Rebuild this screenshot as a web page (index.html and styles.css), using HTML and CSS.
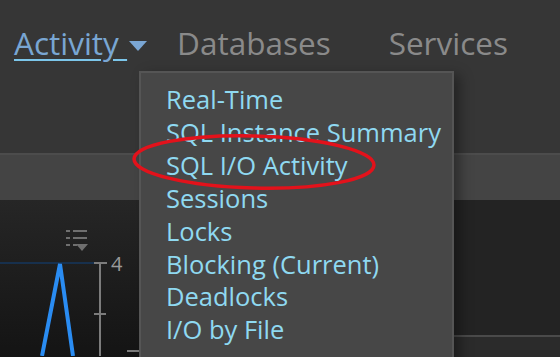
FILE: index.html
```html
<!DOCTYPE html>
<html lang="en">
<head>
    <meta charset="UTF-8">
    <meta name="viewport" content="width=device-width, initial-scale=1.0">
    <title>Activity</title>
    <link rel="stylesheet" href="styles.css">
</head>
<body>
    <div class="page">
        <div class="topbar">
            <nav class="nav">
                <a class="nav-item active" href="#">Activity&nbsp;</a>
                <svg class="caret" width="18" height="10" viewBox="0 0 18 10"><polygon points="0,0 18,0 9,10" fill="#7aa6d4"/></svg>
                <a class="nav-item databases" href="#">Databases</a>
                <a class="nav-item" href="#">Services</a>
            </nav>
        </div>
        <div class="band"></div>
        <div class="panels">
            <div class="chart">
                <svg width="452" height="156" viewBox="0 0 452 156">
                    <!-- filter icon -->
                    <g fill="#6f6f6f">
                        <rect x="66" y="30" width="4" height="2"/>
                        <rect x="73" y="30" width="14" height="2"/>
                        <rect x="66" y="37" width="4" height="2"/>
                        <rect x="73" y="37" width="14" height="2"/>
                        <rect x="66" y="44" width="4" height="2"/>
                        <rect x="73" y="44" width="4" height="2"/>
                        <polygon points="76,44 88,44 82,51"/>
                    </g>
                    <line x1="0" y1="63" x2="96" y2="63" stroke="#17304d" stroke-width="2"/>
                    <polyline points="42,156 60,64 73,156" fill="none" stroke="#2a8cf2" stroke-width="4" stroke-linejoin="miter"/>
                    <!-- axis -->
                    <line x1="100" y1="63" x2="100" y2="156" stroke="#7c7c7c" stroke-width="2"/>
                    <line x1="94" y1="63" x2="107" y2="63" stroke="#7c7c7c" stroke-width="2"/>
                    <line x1="94" y1="114" x2="106" y2="114" stroke="#7c7c7c" stroke-width="2"/>
                    <line x1="127" y1="151" x2="140" y2="151" stroke="#7c7c7c" stroke-width="2"/>
                    <text x="111" y="71" class="axis-label">4</text>
                </svg>
            </div>
            <div class="side">
                <div class="side-chart"></div>
                <div class="side-foot"></div>
            </div>
        </div>

        <ul class="dropdown">
            <li><a href="#">Real-Time</a></li>
            <li><a href="#">SQL Instance Summary</a></li>
            <li><a href="#">SQL I/O Activity</a></li>
            <li><a href="#">Sessions</a></li>
            <li><a href="#">Locks</a></li>
            <li><a href="#">Blocking (Current)</a></li>
            <li><a href="#">Deadlocks</a></li>
            <li><a href="#">I/O by File</a></li>
        </ul>

        <svg class="annotation" width="560" height="357" viewBox="0 0 560 357">
            <ellipse cx="254" cy="162" rx="120" ry="26" transform="rotate(1.5 254 162)" fill="none" stroke="#e3121b" stroke-width="3.5"/>
        </svg>
    </div>
</body>
</html>
```

FILE: styles.css
```css
/* page */
body {
    margin: 0;
    background: #363636;
    font-family: 'Open Sans', 'Noto Sans', sans-serif;
}

.page {
    position: relative;
    width: 560px;
    height: 357px;
    overflow: hidden;
}

.topbar {
    height: 153px;
    background: #363636;
}

.nav {
    display: flex;
    align-items: baseline;
    padding: 23px 0 0 14px;
    font-size: 31.5px;
}

.nav-item {
    color: #8a8a8a;
    text-decoration: none;
    line-height: 40px;
}

.nav-item.active {
    color: #79a6d3;
    text-decoration: underline;
    text-decoration-color: #7cc6ea;
    text-decoration-thickness: 2px;
    text-underline-offset: 4px;
}

.caret {
    margin: 0 30px 0 2px;
    position: relative;
    top: -4px;
}

.nav-item.databases {
    margin-right: 58px;
}

.band {
    height: 45px;
    border-top: 2px solid #4c4c4c;
    background: #444444;
}

.panels {
    display: flex;
    height: 157px;
}

.chart {
    width: 452px;
    background: linear-gradient(#262626, #141414);
}

.chart svg {
    display: block;
}

.axis-label {
    font-family: 'Open Sans', sans-serif;
    font-size: 20px;
    fill: #9a9a9a;
}

.side {
    flex: 1;
    display: flex;
    flex-direction: column;
}

.side-chart {
    height: 135px;
    background: #232323;
}

.side-foot {
    flex: 1;
    border-top: 2px solid #4a4a4a;
    background: #2b2b2b;
}

/* dropdown menu */
.dropdown {
    position: absolute;
    left: 139px;
    top: 71px;
    width: 286px;
    height: 300px;
    margin: 0;
    padding: 10px 0 0 25px;
    list-style: none;
    background: #474747;
    border: 2px solid #555555;
    box-shadow: 6px 4px 12px rgba(0, 0, 0, 0.35);
}

.dropdown li {
    font-size: 25.5px;
    line-height: 32.9px;
}

.dropdown a {
    color: #8fd9f1;
    text-decoration: none;
}

.annotation {
    position: absolute;
    left: 0;
    top: 0;
    pointer-events: none;
}
```
